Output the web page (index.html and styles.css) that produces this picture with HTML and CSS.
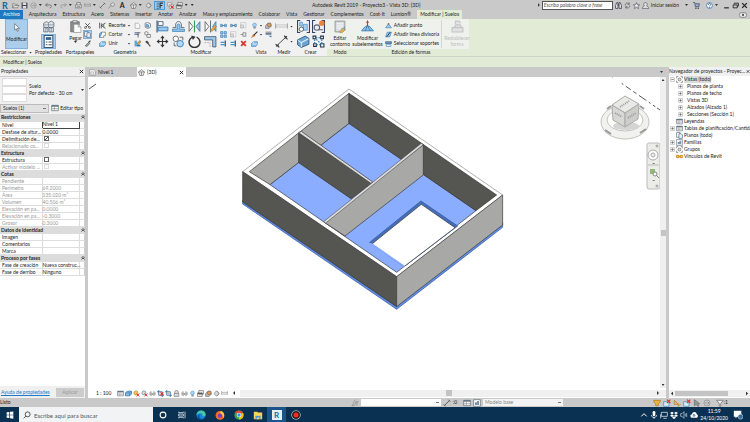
FILE: index.html
```
<!DOCTYPE html>
<html lang="es">
<head>
  <meta charset="UTF-8">
  <meta name="viewport" content="width=device-width, initial-scale=1.0">
  <title>Autodesk Revit 2019 - Proyecto3 - Vista 3D: {3D}</title>
  <link rel="stylesheet" href="styles.css">
</head>
<body>
  <!-- icon sprite -->
  <svg class="sprite" aria-hidden="true">
    <symbol id="open" viewBox="0 0 12 12"><path d="M1 10V3h4l1 1h3v2M1 10l3-4h8l-3 4z" fill="#ddd" stroke="#666"/></symbol>
    <symbol id="save" viewBox="0 0 12 12"><path d="M1 1h9l1 1v9H1z" fill="#445"/><path d="M3 1h6v4H3zM3 7h6v4H3z" fill="#ddd"/></symbol>
    <symbol id="sync" viewBox="0 0 12 12"><circle cx="6" cy="6" r="4.5" fill="#ccc" stroke="#888"/><path d="M3 6h6M7 4l2 2-2 2" fill="none" stroke="#888"/></symbol>
    <symbol id="undo" viewBox="0 0 12 12"><path d="M1 5h7c4 0 4 5 0 5M4 2L1 5l3 3" fill="none" stroke="#555" stroke-width="1.2"/></symbol>
    <symbol id="redo" viewBox="0 0 12 12"><path d="M11 5H4c-4 0-4 5 0 5M8 2l3 3-3 3" fill="none" stroke="#888" stroke-width="1.2"/></symbol>
    <symbol id="print" viewBox="0 0 12 12"><path d="M3 5V1h6v4M1 5h10l1 5H0z" fill="#e4e4e4" stroke="#555"/><path d="M3 8h6" stroke="#555"/></symbol>
    <symbol id="ruler" viewBox="0 0 12 12"><path d="M1 2v6M11 2v6M1 4h10M1 7h10" fill="none" stroke="#888"/></symbol>
    <symbol id="dim" viewBox="0 0 12 12"><path d="M2 10L10 2M1 8l3 3M8 1l3 3" fill="none" stroke="#555" stroke-width="1.3"/></symbol>
    <symbol id="tag" viewBox="0 0 12 12"><path d="M1 11l4-5M5 6c-1-7 8-5 6-1-1 3-4 3-6 1z" fill="#ddd" stroke="#666"/></symbol>
    <symbol id="house" viewBox="0 0 12 12"><path d="M1 5l5-4 5 4-2 6H3z" fill="#eee" stroke="#555"/><path d="M1 5h10M6 5v6" stroke="#555"/></symbol>
    <symbol id="section" viewBox="0 0 12 12"><circle cx="6" cy="6" r="3.5" fill="#ddd" stroke="#777"/><path d="M6 1l5 5-5 5" fill="none" stroke="#777"/></symbol>
    <symbol id="thin" viewBox="0 0 12 12"><path d="M1 2h4M1 5h4M1 8h4M1 11h4" stroke="#234"/><path d="M7 2h5M7 6h4M7 1v10" stroke="#234" stroke-width="2"/></symbol>
    <symbol id="hidden" viewBox="0 0 12 12"><path d="M1 1h7v6H1zM4 4h7v7H4z" fill="#eee" stroke="#888"/><path d="M6 6l5 5M11 6l-5 5" stroke="#d22" stroke-width="1.6"/></symbol>
    <symbol id="windows" viewBox="0 0 12 12"><path d="M3 1h8v6H3zM1 5h8v6H1z" fill="#eee" stroke="#555"/><path d="M1 6h8" stroke="#555" stroke-width="2"/></symbol>
    <symbol id="binoculars" viewBox="0 0 12 12"><path d="M1 11V6l2-5h2v10zM7 11V1h2l2 5v5z" fill="#eee" stroke="#334" stroke-width="1.3"/><path d="M5 5h2" stroke="#334" stroke-width="2"/></symbol>
    <symbol id="key" viewBox="0 0 12 12"><path d="M2 6a4 4 0 017-3M10 6a4 4 0 01-7 3M9 1v3H6M3 11V8h3" fill="none" stroke="#445"/></symbol>
    <symbol id="star" viewBox="0 0 12 12"><path d="M6 1l1.5 3.500 4 .3-3 2.500 1 4L6 9l-3.500 2.300 1-4-3-2.500 4-.3z" fill="#eee" stroke="#445"/></symbol>
    <symbol id="user" viewBox="0 0 12 12"><path d="M0 11c0-3 3-3 4-4-2-3-1-6 2-6s4 3 2 6c1 1 4 1 4 4z" fill="#e4e4e4" stroke="#445"/></symbol>
    <symbol id="cart" viewBox="0 0 12 12"><path d="M0 1h3l1 7h6l1-5H4" fill="#9cb0d0" stroke="#346" stroke-width="1.2"/><circle cx="5" cy="10.500" r="1"/><circle cx="9" cy="10.500" r="1"/></symbol>
    <symbol id="help" viewBox="0 0 12 12"><circle cx="6" cy="6" r="5" fill="#fff" stroke="#357abd" stroke-width="1.5"/><path d="M4 5c0-3 4-3 4-.5C8 6 6 6 6 7.500M6 8.500V10" fill="none" stroke="#235" stroke-width="1.2"/></symbol>
    <symbol id="min" viewBox="0 0 12 12"><path d="M2 10h8" stroke="#222" stroke-width="2"/></symbol>
    <symbol id="restore" viewBox="0 0 12 12"><path d="M4 4V2h7v5H9M2 5h7v5H2z" fill="none" stroke="#222" stroke-width="1.5"/></symbol>
    <symbol id="close" viewBox="0 0 12 12"><path d="M2 2l8 8M10 2l-8 8" stroke="#222" stroke-width="2.2"/></symbol>
    <symbol id="eye" viewBox="0 0 14 12"><rect x="1" y="2" width="12" height="8" rx="3" fill="#eee" stroke="#555"/><circle cx="7" cy="6" r="2" fill="#555"/></symbol>

    <symbol id="cursor" viewBox="0 0 24 24"><path d="M7 2v17l4-4 3 7 3-1-3-7h6z" fill="#fff" stroke="#333" stroke-width="1.3"/></symbol>
    <symbol id="types" viewBox="0 0 24 24"><path d="M3 6l5-3 4 2 5-3 5 3v7l-5 3-5-2-4 2-5-3zM3 14h8v8H3zM13 14h8v8h-8z" fill="#dfe3e6" stroke="#5a6a7a" stroke-width="1.4"/><path d="M12 5v9M3 9h18M7 14v8M17 14v8" stroke="#5a6a7a"/></symbol>
    <symbol id="props" viewBox="0 0 24 24"><path d="M4 1h16v22H4z" fill="#fff" stroke="#3c5876" stroke-width="2"/><path d="M7 4h10v5H7z" fill="#345f8c"/><path d="M7 13h3M12 13h6M7 18h3M12 18h6" stroke="#456" stroke-width="2"/></symbol>
    <symbol id="paste" viewBox="0 0 24 24"><path d="M3 3h16v19H3z" fill="#8b8e91" stroke="#555"/><path d="M7 1h8v4H7z" fill="#ddd" stroke="#555"/><path d="M9 8h8l5 5v10H9z" fill="#fff" stroke="#777"/><path d="M17 8v5h5" fill="#dde" stroke="#777"/></symbol>
    <symbol id="cut" viewBox="0 0 12 12"><path d="M2 2l7 7M10 2L3 9" stroke="#333" stroke-width="1.3"/><circle cx="2.500" cy="9.500" r="1.700" fill="none" stroke="#333"/><circle cx="9.500" cy="9.500" r="1.700" fill="none" stroke="#333"/></symbol>
    <symbol id="copy" viewBox="0 0 12 12"><path d="M1 1h6v8H1z" fill="#fff" stroke="#456"/><path d="M5 3h4l2 2v6H5z" fill="#e8f2fb" stroke="#357"/></symbol>
    <symbol id="match" viewBox="0 0 12 12"><path d="M2 10l6-6 2 2-5 5z" fill="#9ab" stroke="#444"/><path d="M8 4l3-3" stroke="#333" stroke-width="2"/></symbol>
    <symbol id="cope" viewBox="0 0 12 12"><path d="M1 1v10M4 2v9" stroke="#444" stroke-width="1.300"/><path d="M4 6l7-4M4 6l7 5" stroke="#444" stroke-width="1.500"/><path d="M8 5v3" stroke="#2a8bd0" stroke-width="2"/></symbol>
    <symbol id="solid" viewBox="0 0 12 12"><path d="M4 2h7v6H8v3H1V5h3z" fill="#fff" stroke="#555"/><path d="M1 5l3-3v4l-3 5z" fill="#8fc3ea" stroke="#2777b4"/></symbol>
    <symbol id="union" viewBox="0 0 12 12"><path d="M1 6l3-3h7v5l-3 3H1z" fill="#90c2ec" stroke="#2777b4"/><path d="M4 3v4h7" fill="none" stroke="#fff"/></symbol>
    <symbol id="page" viewBox="0 0 12 12"><path d="M2 2h5l3 3v6H2z" fill="#f7f7f7" stroke="#999"/></symbol>
    <symbol id="box" viewBox="0 0 12 12"><path d="M2 2l4-1 5 2v6l-4 2-5-2z" fill="#fff" stroke="#345"/><path d="M4 4l4 1v4L4 8z" fill="#77b3e4" stroke="#2777b4"/></symbol>
    <symbol id="beam" viewBox="0 0 12 12"><path d="M1 3h10M1 6h7M7 3v8" stroke="#556" stroke-width="1.500"/><path d="M1 4h4v2H1z" fill="#6db4ee"/></symbol>
    <symbol id="shapes" viewBox="0 0 12 12"><circle cx="4" cy="4" r="3" fill="#eee" stroke="#555"/><path d="M5 6h6v5H5z" fill="#eee" stroke="#555"/></symbol>
    <symbol id="paint" viewBox="0 0 12 12"><path d="M1 1h4v10H1z" fill="#5aa6dc"/><path d="M5 8h6v3H5z" fill="#2777b4"/><path d="M5 6l5-5 2 2-5 5z" fill="#e9aa3d" stroke="#654"/></symbol>
    <symbol id="hammer" viewBox="0 0 12 12"><path d="M2 3l3-2 4 4-3 2z" fill="#444"/><path d="M6 5l5 6" stroke="#654" stroke-width="2"/></symbol>

    <symbol id="align" viewBox="0 0 24 24"><path d="M2 1v22" stroke="#246" stroke-width="2"/><path d="M4 3h9v7H4z" fill="#fff" stroke="#456" stroke-width="1.500"/><path d="M4 13h18v7H4z" fill="#9bc9ee" stroke="#2777b4" stroke-width="1.500"/></symbol>
    <symbol id="offset" viewBox="0 0 24 24"><path d="M1 14h6c-3-15 13-15 10 0h6" fill="none" stroke="#456" stroke-width="1.500"/><path d="M1 17h9C6 4 18 4 14 17h9v4H1z" fill="#9bc9ee" stroke="#2777b4" stroke-width="1.300"/></symbol>
    <symbol id="mirror" viewBox="0 0 24 24"><path d="M2 3l7 9-7 9z" fill="#fff" stroke="#555" stroke-width="1.500"/><path d="M22 3l-7 9 7 9z" fill="#9bc9ee" stroke="#2777b4" stroke-width="1.500"/><path d="M12 1v22" stroke="#3a9a55" stroke-width="2"/></symbol>
    <symbol id="mirrordraw" viewBox="0 0 24 24"><path d="M2 3l7 9-7 9z" fill="#fff" stroke="#555" stroke-width="1.500"/><path d="M22 3l-6 9 6 9z" fill="#9bc9ee" stroke="#2777b4" stroke-width="1.500"/><path d="M12 1v22" stroke="#456" stroke-width="1.500"/><path d="M12 19l8-9 3 2-8 9z" fill="#efb23f" stroke="#864"/></symbol>
    <symbol id="move" viewBox="0 0 24 24"><path d="M12 1l4 5h-3v5h5V8l5 4-5 4v-3h-5v5h3l-4 5-4-5h3v-5H6v3l-5-4 5-4v3h5V6H8z" fill="#333"/></symbol>
    <symbol id="copies" viewBox="0 0 24 24"><circle cx="7" cy="7" r="5" fill="#fff" stroke="#555" stroke-width="1.500"/><circle cx="15" cy="16" r="6" fill="#b2d7f3" stroke="#2777b4" stroke-width="1.500"/><path d="M14 4h6v6M4 14v6h4" fill="none" stroke="#456" stroke-width="1.500"/></symbol>
    <symbol id="rotate" viewBox="0 0 24 24"><path d="M8 4a10 10 0 108 0" fill="none" stroke="#333" stroke-width="2.600"/><path d="M6 1l8 2-5 6z" fill="#333"/></symbol>
    <symbol id="trim" viewBox="0 0 24 24"><path d="M1 3h21v19h-6V9H1z" fill="#9bc9ee" stroke="#456" stroke-width="1.500"/><path d="M1 14h10v9" fill="none" stroke="#777" stroke-dasharray="3 2"/></symbol>
    <symbol id="split" viewBox="0 0 12 12"><path d="M1 4h3v4H1zM8 4h3v4H8z" fill="#8bc3ec" stroke="#2777b4"/><path d="M4 6h4" stroke="#333"/></symbol>
    <symbol id="array" viewBox="0 0 12 12"><path d="M1 1h4v4H1zM7 1h4v4H7zM1 7h4v4H1zM7 7h4v4H7z" fill="#9bc9ee" stroke="#2777b4"/></symbol>
    <symbol id="scale" viewBox="0 0 12 12"><path d="M1 1h9v9H1z" fill="#f4f4f4" stroke="#bbb"/><path d="M1 5h5v5H1z" fill="#ddd" stroke="#aaa"/></symbol>
    <symbol id="extend" viewBox="0 0 12 12"><path d="M9 1v10" stroke="#345" stroke-width="2"/><path d="M1 4h7M1 8h7" stroke="#4393cc" stroke-width="2"/></symbol>
    <symbol id="pin" viewBox="0 0 12 12"><path d="M1 6h4M5 3h5v6H5z" fill="#eee" stroke="#777" stroke-width="1.300"/></symbol>
    <symbol id="delete" viewBox="0 0 12 12"><path d="M2 2l8 8M10 2l-8 8" stroke="#dc3428" stroke-width="3"/></symbol>
    <symbol id="bulb" viewBox="0 0 12 12"><path d="M4 8C-1 1 13-1 8 8z" fill="#a7d4f8" stroke="#4590cb"/><path d="M4 9h4v2H4z" fill="#777"/></symbol>
    <symbol id="override" viewBox="0 0 12 12"><path d="M1 6l4-4h5l1 5-4 4H1z" fill="#bbb" stroke="#666"/><circle cx="7" cy="5" r="3" fill="#e79b52" stroke="#765"/></symbol>
    <symbol id="brush" viewBox="0 0 12 12"><path d="M1 11l3-5 3 2z" fill="#c8782c" stroke="#c8782c"/><path d="M5 7l6-6" stroke="#333" stroke-width="2"/></symbol>
    <symbol id="lines" viewBox="0 0 12 12"><path d="M1 2h10" stroke="#333"/><path d="M1 5h10" stroke="#246" stroke-width="2"/><path d="M6 8h5v3z" fill="#2777b4"/></symbol>
    <symbol id="measure" viewBox="0 0 24 24"><path d="M1 6v10M23 6v10" stroke="#999" stroke-width="1.500"/><path d="M2 9h20v4H2z" fill="#eee" stroke="#aaa"/></symbol>
    <symbol id="bigdim" viewBox="0 0 24 24"><path d="M4 19L20 4" stroke="#333" stroke-width="1.600"/><path d="M1 17l7 6M17 1l6 7M2 21l5-3M18 6l4-4" stroke="#333" stroke-width="2"/></symbol>
    <symbol id="group" viewBox="0 0 24 24"><path d="M6 1H1v22h5M18 1h5v22h-5" fill="none" stroke="#346" stroke-width="2"/><path d="M5 4h5v7H5zM12 8h7v11h-7z" fill="#a7d0f0" stroke="#2777b4"/><circle cx="8" cy="17" r="4" fill="#fff" stroke="#345" stroke-width="1.500"/></symbol>
    <symbol id="similar" viewBox="0 0 24 24"><path d="M6 1H1v22h5M18 1h5v22h-5" fill="none" stroke="#346" stroke-width="2"/><circle cx="9" cy="14" r="5" fill="#eee" stroke="#567" stroke-width="2"/><circle cx="18" cy="6" r="5" fill="#e8853d"/><path d="M12 18h8" stroke="#567" stroke-width="2"/></symbol>
    <symbol id="assembly" viewBox="0 0 24 24"><path d="M1 9l14-7 7 4v11L8 23l-7-5z" fill="#6da5d2" stroke="#275478" stroke-width="1.500"/><path d="M2 10l6 4 13-7M8 14v8" fill="none" stroke="#d8edff" stroke-width="2"/></symbol>
    <symbol id="parts" viewBox="0 0 24 24"><path d="M2 2h5v5H2zM16 2h5v5h-5zM3 16h5v5H3zM16 16h6v6h-6z" fill="#fff" stroke="#234" stroke-width="2"/><path d="M7 5h9M5 8v8M18 8v8M8 18h8M8 8l8 8" stroke="#2777b4" stroke-width="2" stroke-dasharray="3 2"/></symbol>
    <symbol id="sketch" viewBox="0 0 24 24"><path d="M2 2h18v16l-5 4H2z" fill="#d9dcde" stroke="#888" stroke-width="1.500"/><path d="M5 7h12M5 11h12M5 15h8" stroke="#fff" stroke-width="1.500"/><path d="M13 17h6v-5" fill="none" stroke="#2777b4"/><path d="M10 22l7-7 4 3-7 6z" fill="#efb23f" stroke="#875"/></symbol>
    <symbol id="subelem" viewBox="0 0 24 24"><path d="M1 20l6-7 5-3 5 3 6 7z" fill="#91c5ed" stroke="#2777b4" stroke-width="1.500"/><path d="M12 1v9" stroke="#c33" stroke-width="2"/><path d="M9 5l3-4 3 4z" fill="#c33"/><path d="M12 10l-4 10M12 10l5 10" stroke="#246"/></symbol>
    <symbol id="point" viewBox="0 0 12 12"><path d="M1 10l5-7 5 7z" fill="#9bc9ee" stroke="#2777b4"/><circle cx="6" cy="3" r="1.500" fill="#a55"/></symbol>
    <symbol id="splitline" viewBox="0 0 12 12"><path d="M1 10l3-8h7l-3 8z" fill="#9bc9ee" stroke="#2777b4"/><path d="M3 10l6-8" stroke="#135" stroke-width="1.500"/></symbol>
    <symbol id="support" viewBox="0 0 12 12"><path d="M1 3h10v3H1z" fill="#5ca4da" stroke="#246"/><path d="M2 8h8v3H2z" fill="#fff" stroke="#2777b4"/></symbol>
    <symbol id="reset" viewBox="0 0 24 24"><path d="M2 22V14h20v8zM6 14l3-5h8l3 5M8 8V2h7l3 4" fill="#e2e2e2" stroke="#c4c4c4" stroke-width="2"/></symbol>

    <symbol id="sheet" viewBox="0 0 12 12"><path d="M1 2h10v8H1z" fill="#fff" stroke="#567"/><path d="M1 3h10" stroke="#567" stroke-width="2"/><path d="M1 7h10M5 4v6" stroke="#888"/></symbol>
    <symbol id="plan" viewBox="0 0 12 12"><path d="M1 1h7l3 3v7H1z" fill="#f4f4f4" stroke="#888"/><path d="M3 5h5v4H3z" fill="none" stroke="#999"/></symbol>
    <symbol id="views" viewBox="0 0 12 12"><path d="M1 4V1h3M8 1h3v3M11 8v3H8M4 11H1V8" fill="none" stroke="#555"/><circle cx="6" cy="6" r="2.500" fill="#ddd" stroke="#555"/></symbol>
    <symbol id="family" viewBox="0 0 12 12"><path d="M1 1h10v10H1z" fill="#fff" stroke="#567"/><path d="M3 9V5h3V3h3v6z" fill="#7d93aa"/></symbol>
    <symbol id="link" viewBox="0 0 12 12"><path d="M1 4h4v4H1zM7 4h4v4H7zM4 6h4" fill="#f6cf62" stroke="#c98a17" stroke-width="1.500"/></symbol>
    <symbol id="expand" viewBox="0 0 8 8"><path d="M1 1h6v6H1z" fill="#fff" stroke="#aaa"/><path d="M2 4h4M4 2v4" stroke="#555"/></symbol>
    <symbol id="collapse" viewBox="0 0 8 8"><path d="M1 1h6v6H1z" fill="#fff" stroke="#aaa"/><path d="M2 4h4" stroke="#555"/></symbol>
    <symbol id="fold" viewBox="0 0 8 8"><path d="M1 4l3-3 3 3M1 7l3-3 3 3" fill="none" stroke="#222" stroke-width="1.500"/></symbol>
    <symbol id="cubeblue" viewBox="0 0 12 12"><path d="M1 5l3-3h7v5l-3 3H1z" fill="#8cc1ec" stroke="#276aa2" stroke-width="1.300"/><path d="M1 5h7v5M8 5l3-3" fill="none" stroke="#276aa2"/></symbol>
    <symbol id="sunoff" viewBox="0 0 12 12"><circle cx="5" cy="5" r="3.500" fill="#f7c857" stroke="#a87a20"/><path d="M6 6l5 5M11 6l-5 5" stroke="#d33" stroke-width="1.600"/></symbol>
    <symbol id="ringoff" viewBox="0 0 12 12"><circle cx="5" cy="5" r="3.500" fill="#ddd" stroke="#4b6e8e"/><path d="M6 6l5 5M11 6l-5 5" stroke="#d33" stroke-width="1.600"/></symbol>
    <symbol id="crop" viewBox="0 0 12 12"><path d="M3 0v9h9M0 3h9v9" fill="none" stroke="#337ab7" stroke-width="1.600"/><path d="M4 4h4v4H4z" fill="#bbb"/></symbol>
    <symbol id="cropoff" viewBox="0 0 12 12"><path d="M3 0v9h9M0 3h9v9" fill="none" stroke="#337ab7" stroke-width="1.600"/><path d="M6 4l5 5M11 4L6 9" stroke="#d33" stroke-width="2"/></symbol>
    <symbol id="lock" viewBox="0 0 12 12"><path d="M3 6V3c0-3 6-3 6 0v3M2 6h8v5H2z" fill="#ddd" stroke="#666"/></symbol>
    <symbol id="glasses" viewBox="0 0 12 12"><path d="M1 5l3-3M11 5L8 2" stroke="#666"/><circle cx="3.500" cy="7" r="2.200" fill="#ddd" stroke="#666"/><circle cx="8.500" cy="7" r="2.200" fill="#ddd" stroke="#666"/></symbol>
    <symbol id="worksets" viewBox="0 0 12 12"><path d="M2 10L6 1M5 10L8 4M9 10V4M1 10h4M7 4h4" fill="none" stroke="#888"/></symbol>
    <symbol id="filter" viewBox="0 0 12 12"><path d="M1 2h10L7 7v4H5V7z" fill="#eee" stroke="#666"/></symbol>
    <symbol id="filterorange" viewBox="0 0 12 12"><path d="M1 2h10v2L8 7v3H4V7L1 4z" fill="#eeb23c" stroke="#a4731c"/></symbol>
    <symbol id="select" viewBox="0 0 12 12"><path d="M2 1v9l3-2 2 3 2-1-2-3h3z" fill="#999" stroke="#666"/></symbol>
    <symbol id="selectoff" viewBox="0 0 12 12"><path d="M1 4h8v7H1z" fill="#d7ebfa" stroke="#3d83b8"/><path d="M6 1l5 5M11 1L6 6" stroke="#d33" stroke-width="1.800"/></symbol>
    <symbol id="pinoff" viewBox="0 0 12 12"><path d="M2 2l6 6v3l3-3M2 2v6h6" fill="#f2bb68" stroke="#b4722b"/></symbol>

    <symbol id="win" viewBox="0 0 12 12"><path d="M1 2l4-.6v4.200H1zM6 1.300L11 .6v5H6zM1 6.500h4v4L1 10zM6 6.500h5v5l-5-.8z" fill="#fff"/></symbol>
    <symbol id="search" viewBox="0 0 12 12"><circle cx="7" cy="5" r="3.700" fill="none" stroke="#333" stroke-width="1.200"/><path d="M4.500 7.500L1 11" stroke="#333" stroke-width="1.200"/></symbol>
    <symbol id="cortana" viewBox="0 0 12 12"><circle cx="6" cy="6" r="4.300" fill="none" stroke="#fff" stroke-width="1.600"/></symbol>
    <symbol id="taskview" viewBox="0 0 12 12"><path d="M1 1v1.500h7V1M1 11V9.500h7V11M1 4.500h7v3H1zM10.500 1v10" fill="none" stroke="#dde6ee" stroke-width="1.200"/></symbol>
    <symbol id="edge" viewBox="0 0 12 12"><circle cx="6" cy="6" r="5.500" fill="#1683d8"/><path d="M.6 6C1 2 4 .4 6.500.5 10 .7 12 3.500 11.500 6c-.5 2-4 2-4 1C9 4 4 2 .6 6z" fill="#46c9a3"/><path d="M4.500 5c-2 4 1 7 5.500 5-2 2-8 2-8-2 0-1 1-2.500 2.500-3z" fill="#0c4c9b"/></symbol>
    <symbol id="firefox" viewBox="0 0 12 12"><circle cx="6" cy="6.500" r="5.300" fill="#fb6a25"/><path d="M7 1c4 2 5 6 3 9 0-4-2-5-5-6 1 0 2-1 2-3z" fill="#ffcf3d"/><circle cx="6" cy="6.800" r="2.600" fill="#7b3fc4"/></symbol>
    <symbol id="chrome" viewBox="0 0 12 12"><circle cx="6" cy="6" r="5.500" fill="#33a852"/><path d="M6 6L1.200 3.300A5.500 5.500 0 0110.800 3.300z" fill="#ea4335"/><path d="M6 6l4.800-2.700A5.500 5.500 0 016 11.500z" fill="#fbbc05"/><circle cx="6" cy="6" r="2.700" fill="#fff"/><circle cx="6" cy="6" r="2" fill="#4285f4"/></symbol>
    <symbol id="folder" viewBox="0 0 12 12"><path d="M1 2h4l1 1h5v8H1z" fill="#f8d265"/><path d="M3 7h6v4H3z" fill="#3c9be0"/><path d="M4.500 9h3v2h-3z" fill="#f8d265"/></symbol>
    <symbol id="record" viewBox="0 0 12 12"><circle cx="6" cy="6" r="5.500" fill="#eee"/><circle cx="6" cy="6" r="4.800" fill="#222"/><circle cx="6" cy="6" r="3" fill="#f52a1e"/></symbol>
    <symbol id="up" viewBox="0 0 12 12"><path d="M2 8l4-4 4 4" fill="none" stroke="#fff" stroke-width="1.500"/></symbol>
    <symbol id="mic" viewBox="0 0 12 12"><rect x="4" width="4" height="8" rx="2" fill="#fff"/><path d="M2 6c0 5 8 5 8 0M6 9v3" fill="none" stroke="#fff"/></symbol>
    <symbol id="monitor" viewBox="0 0 12 12"><path d="M2 2h9v6H2zM5 11h5M1 5v6" fill="none" stroke="#fff"/></symbol>
    <symbol id="dropbox" viewBox="0 0 12 12"><path d="M3 1l3 2-3 2-3-2zM9 1l3 2-3 2-3-2zM3 5l3 2-3 2-3-2zM9 5l3 2-3 2-3-2zM6 8l3 2-3 2-3-2z" fill="#fff"/></symbol>
    <symbol id="volume" viewBox="0 0 12 12"><path d="M1 4h2l3-3v10L3 8H1zM8 4v4M10 3v6" fill="none" stroke="#ccd6df"/></symbol>
    <symbol id="cloud" viewBox="0 0 12 12"><path d="M2 10c-3-2-1-5 1-5 1-5 7-4 7 0 3 1 2 5 0 5z" fill="#fff"/><path d="M6 9V5M4 7l2-2 2 2" fill="none" stroke="#0b3152"/></symbol>
    <symbol id="notice" viewBox="0 0 12 12"><path d="M1 1h9v7H5l-2 2V8H1z" fill="#fff"/><circle cx="9" cy="8" r="3" fill="#3a6f9c" stroke="#dbe8f2" stroke-width=".6"/></symbol>
  </svg>

  <header class="titlebar">
    <div class="quick">
      <b class="logo">R</b>
      <svg><use href="#open"/></svg>
      <svg><use href="#save"/></svg>
      <svg><use href="#sync"/></svg><i class="arrow"></i>
      <svg><use href="#undo"/></svg><i class="arrow"></i>
      <svg><use href="#redo"/></svg><i class="arrow"></i>
      <svg><use href="#print"/></svg>
      <svg><use href="#ruler"/></svg><i class="arrow"></i>
      <svg><use href="#dim"/></svg>
      <svg><use href="#tag"/></svg>
      <b class="letter">A</b>
      <svg><use href="#house"/></svg><i class="arrow"></i>
      <svg><use href="#section"/></svg>
      <span class="pressed"><svg><use href="#thin"/></svg></span>
      <svg><use href="#hidden"/></svg>
      <svg><use href="#windows"/></svg><i class="arrow"></i><i class="arrow"></i>
    </div>
    <h1>Autodesk Revit 2019 - Proyecto3 - Vista 3D: {3D}</h1>
    <div class="infocenter">
      <i class="arrow right"></i>
      <input type="text" placeholder="Escriba palabra clave o frase" aria-label="Buscar ayuda">
      <svg><use href="#binoculars"/></svg>
      <svg><use href="#key"/></svg>
      <svg><use href="#star"/></svg>
      <svg><use href="#user"/></svg>
      <a href="#" class="login">Iniciar sesión</a><i class="arrow"></i>
      <svg><use href="#cart"/></svg>
      <svg class="help"><use href="#help"/></svg><i class="arrow"></i>
      <svg class="first"><use href="#min"/></svg>
      <svg><use href="#restore"/></svg>
      <svg><use href="#close"/></svg>
    </div>
  </header>

  <nav class="tabs">
    <a href="#" class="file">Archivo</a>
    <a href="#">Arquitectura</a>
    <a href="#">Estructura</a>
    <a href="#">Acero</a>
    <a href="#">Sistemas</a>
    <a href="#">Insertar</a>
    <a href="#">Anotar</a>
    <a href="#">Analizar</a>
    <a href="#">Masa y emplazamiento</a>
    <a href="#">Colaborar</a>
    <a href="#">Vista</a>
    <a href="#">Gestionar</a>
    <a href="#">Complementos</a>
    <a href="#">Cost-It</a>
    <a href="#">Lumion®</a>
    <a href="#" class="active">Modificar | Suelos</a>
    <svg><use href="#eye"/></svg>
  </nav>

  <section class="ribbon">
    <div class="panel w-select">
      <div class="tools"><button class="big on"><svg><use href="#cursor"/></svg>Modificar</button></div>
      <h2>Seleccionar <i class="arrow"></i></h2>
    </div>
    <div class="panel w-props">
      <div class="tools stack">
        <button><svg class="lg"><use href="#types"/></svg></button>
        <button class="on"><svg class="lg"><use href="#props"/></svg></button>
      </div>
      <h2>Propiedades</h2>
    </div>
    <div class="panel w-clip">
      <div class="tools">
        <button class="big"><svg><use href="#paste"/></svg>Pegar<i class="arrow"></i></button>
        <div class="rows">
          <button><svg><use href="#cut"/></svg></button>
          <button class="on"><svg><use href="#copy"/></svg></button>
          <button><svg><use href="#match"/></svg></button>
        </div>
      </div>
      <h2>Portapapeles</h2>
    </div>
    <div class="panel w-geo">
      <div class="tools">
        <div class="rows text">
          <button><svg><use href="#cope"/></svg>Recorte<i class="arrow"></i></button>
          <button><svg><use href="#solid"/></svg>Cortar<i class="arrow"></i></button>
          <button><svg><use href="#union"/></svg>Unir<i class="arrow"></i></button>
        </div>
        <div class="rows">
          <button><svg><use href="#page"/></svg></button>
          <button><svg><use href="#beam"/></svg></button>
          <button><svg><use href="#paint"/></svg></button>
        </div>
        <div class="rows">
          <button><svg><use href="#box"/></svg></button>
          <button><svg><use href="#shapes"/></svg></button>
          <button><svg><use href="#hammer"/></svg></button>
        </div>
      </div>
      <h2>Geometría</h2>
    </div>
    <div class="panel w-modify">
      <div class="tools">
        <div class="grid4">
          <button><svg class="lg"><use href="#align"/></svg></button>
          <button><svg class="lg"><use href="#offset"/></svg></button>
          <button><svg class="lg"><use href="#mirror"/></svg></button>
          <button><svg class="lg"><use href="#mirrordraw"/></svg></button>
          <button><svg class="lg"><use href="#move"/></svg></button>
          <button><svg class="lg"><use href="#copies"/></svg></button>
          <button><svg class="lg"><use href="#rotate"/></svg></button>
          <button><svg class="lg"><use href="#trim"/></svg></button>
        </div>
        <div class="rows">
          <button><svg><use href="#split"/></svg></button>
          <button><svg><use href="#array"/></svg></button>
          <button><svg><use href="#extend"/></svg></button>
        </div>
        <div class="rows">
          <button><svg><use href="#split"/></svg></button>
          <button><svg><use href="#scale"/></svg></button>
          <button><svg><use href="#extend"/></svg></button>
        </div>
        <div class="rows">
          <button><svg><use href="#scale"/></svg></button>
          <button><svg><use href="#pin"/></svg></button>
          <button><svg><use href="#delete"/></svg></button>
        </div>
      </div>
      <h2>Modificar</h2>
    </div>
    <div class="panel w-view">
      <div class="tools">
        <div class="rows">
          <button><svg><use href="#bulb"/></svg><i class="arrow"></i></button>
          <button><svg><use href="#brush"/></svg><i class="arrow"></i></button>
          <button><svg><use href="#union"/></svg></button>
        </div>
        <div class="rows">
          <button><svg><use href="#override"/></svg></button>
          <button><svg><use href="#lines"/></svg></button>
        </div>
      </div>
      <h2>Vista</h2>
    </div>
    <div class="panel w-measure">
      <div class="tools stack">
        <button><svg class="lg"><use href="#measure"/></svg><i class="arrow"></i></button>
        <button><svg class="lg"><use href="#bigdim"/></svg><i class="arrow"></i></button>
      </div>
      <h2>Medir</h2>
    </div>
    <div class="panel w-create">
      <div class="tools">
        <div class="grid2">
          <button><svg class="lg"><use href="#group"/></svg></button>
          <button><svg class="lg"><use href="#similar"/></svg></button>
          <button><svg class="lg"><use href="#assembly"/></svg></button>
          <button><svg class="lg"><use href="#parts"/></svg></button>
        </div>
      </div>
      <h2>Crear</h2>
    </div>
    <div class="panel w-mode green">
      <div class="tools"><button class="big"><svg><use href="#sketch"/></svg>Editar<br>contorno</button></div>
      <h2>Modo</h2>
    </div>
    <div class="panel w-shape green">
      <div class="tools">
        <button class="big"><svg><use href="#subelem"/></svg>Modificar<br>subelementos</button>
        <div class="rows text">
          <button><svg><use href="#point"/></svg>Añadir punto</button>
          <button><svg><use href="#splitline"/></svg>Añadir línea divisoria</button>
          <button><svg><use href="#support"/></svg>Seleccionar soportes</button>
        </div>
        <button class="big last" disabled><svg><use href="#reset"/></svg>Restablecer<br>forma</button>
      </div>
      <h2>Edición de formas</h2>
    </div>
  </section>

  <div class="options">Modificar | Suelos</div>

  <main>
    <aside class="properties">
      <div class="caption">Propiedades <svg><use href="#close"/></svg></div>
      <div class="type">
        <div class="swatch"><i></i><i></i><i></i></div>
        <p>Suelo<br>Por defecto - 30 cm</p>
        <i class="arrow"></i>
      </div>
      <div class="filter">
        <select aria-label="Filtro de propiedades"><option>Suelos (1)</option></select>
        <button><svg><use href="#sheet"/></svg>Editar tipo</button>
      </div>
      <div class="sheet">
        <table>
          <colgroup><col class="name"><col><col class="bar"></colgroup>
          <tr class="head"><th colspan="2">Restricciones</th><td><svg><use href="#fold"/></svg></td></tr>
          <tr><th>Nivel</th><td class="boxed">Nivel 1</td><td></td></tr>
          <tr><th>Desfase de altur...</th><td>0.0000</td><td></td></tr>
          <tr><th><label for="delim">Delimitación de...</label></th><td><input type="checkbox" id="delim" checked></td><td></td></tr>
          <tr class="off"><th><label for="rel">Relacionado co...</label></th><td><input type="checkbox" id="rel" disabled></td><td></td></tr>
          <tr class="head"><th colspan="2">Estructura</th><td><svg><use href="#fold"/></svg></td></tr>
          <tr><th><label for="estr">Estructura</label></th><td><input type="checkbox" id="estr"></td><td></td></tr>
          <tr class="off"><th><label for="act">Activar modelo ...</label></th><td><input type="checkbox" id="act" disabled></td><td></td></tr>
          <tr class="head"><th colspan="2">Cotas</th><td><svg><use href="#fold"/></svg></td></tr>
          <tr class="off"><th>Pendiente</th><td></td><td></td></tr>
          <tr class="off"><th>Perímetro</th><td>69.2000</td><td></td></tr>
          <tr class="off"><th>Área</th><td>135.020 m²</td><td></td></tr>
          <tr class="off"><th>Volumen</th><td>40.506 m³</td><td></td></tr>
          <tr class="off"><th>Elevación en pa...</th><td>0.0000</td><td></td></tr>
          <tr class="off"><th>Elevación en pa...</th><td>-0.3000</td><td></td></tr>
          <tr class="off"><th>Grosor</th><td>0.3000</td><td></td></tr>
          <tr class="head"><th colspan="2">Datos de identidad</th><td><svg><use href="#fold"/></svg></td></tr>
          <tr><th>Imagen</th><td></td><td></td></tr>
          <tr><th>Comentarios</th><td></td><td></td></tr>
          <tr><th>Marca</th><td></td><td></td></tr>
          <tr class="head"><th colspan="2">Proceso por fases</th><td><svg><use href="#fold"/></svg></td></tr>
          <tr><th>Fase de creación</th><td>Nueva construc...</td><td></td></tr>
          <tr><th>Fase de derribo</th><td>Ninguno</td><td></td></tr>
        </table>
      </div>
      <div class="apply">
        <a href="#">Ayuda de propiedades</a>
        <button disabled>Aplicar</button>
      </div>
    </aside>

    <section class="workspace">
      <div class="viewtabs">
        <a href="#"><svg><use href="#plan"/></svg>Nivel 1</a>
        <a href="#" class="current"><svg><use href="#house"/></svg>{3D}<svg class="x"><use href="#close"/></svg></a>
        <i class="arrow"></i>
      </div>
      <div class="viewport">
        <svg class="model" viewBox="88 77 572 311">
          <g transform="translate(230 80) scale(.3333)" stroke="#333" stroke-width="2">
            <!-- slab edge below the walls -->
            <path d="M38 362v10l462 316 318-246v-14L500 676z" fill="#5f8fe8" stroke="#2f4f96"/>
            <!-- wall tops -->
            <path d="M38 275L357 27l461 318-318 245z" fill="#fff" stroke="#888"/>
            <!-- floor -->
            <path d="M357 130l381 262-238 185L120 314z" fill="#8aadff"/>
            <!-- inner faces of outer walls -->
            <path d="M58 275L357 40v90L120 314z" fill="#a8a8a6"/>
            <path d="M357 40l443 305-62 47-381-262z" fill="#555552"/>
            <!-- partitions -->
            <path d="M206 160v88l157 108 64-47z" fill="#555552"/>
            <path d="M206 158l8-4 213 151-3 6z" fill="#ddd"/>
            <path d="M580 194v91L345 468l-62-41z" fill="#a8a8a6"/>
            <path d="M574 190l6 4-293 235-6-4z" fill="#ddd" stroke-width="1.500"/>
            <!-- floor opening -->
            <path d="M573 363l110 75-161 122-104-72z" fill="#456eb8" stroke="#2f4f96"/>
            <path d="M574 373l101 70-153 117-96-68z" fill="#fff"/>
            <path d="M418 490l8 3 98 67" fill="none" stroke="#8aadff" stroke-width="5"/>
            <!-- outer faces -->
            <path d="M38 275l462 315v90L38 366z" fill="#555552"/>
            <path d="M500 590l318-245v90L500 680z" fill="#a8a8a6"/>
          </g>
          <path d="M89 89l7-5" stroke="#555" fill="none"/>
          <path d="M611 76l49 34" stroke="#555" stroke-dasharray="2 11 2 3 6 3 4 3 9 3 2 3 3" fill="none"/>
          <!-- view cube -->
          <g fill="none" stroke="#c2c2c0">
            <ellipse cx="625" cy="122" rx="24" ry="17" fill="#f1f1ef"/>
            <ellipse cx="625" cy="120" rx="18" ry="11" fill="#fff"/>
          </g>
          <ellipse cx="626" cy="126" rx="13" ry="4" fill="#d4d4d2"/>
          <g fill="#d7d7d4" stroke="#aaa">
            <path d="M612 105l13-9 14 8-14 9z" fill="#e9e9e7"/>
            <path d="M612 105l13 8v14l-12-7z"/>
            <path d="M639 104l-14 9v14l13-8z" fill="#cdcdca"/>
            <path d="M605 130l6 4M640 133l6-4M607 109l4-3M640 106l4 3" fill="none" stroke="#999" stroke-width="2"/>
          </g>
          <path d="M620 107l9-6M615 113l7 4M628 118l8-5" stroke="#999" stroke-width="2" stroke-dasharray="1 1"/>
          <!-- navigation bar -->
          <rect x="647" y="143" width="13" height="46" rx="2" fill="#ececea" stroke="#bbb"/>
          <path d="M648 165h11" stroke="#bbb"/>
          <circle cx="653" cy="155" r="5" fill="#fff" stroke="#aaa"/>
          <circle cx="653" cy="155" r="2" fill="#eee" stroke="#aaa"/>
          <path d="M650 169h5v5h-5z" fill="#8fbc72"/>
          <circle cx="655" cy="174" r="2" fill="#fff" stroke="#888"/><path d="M656 175l3 3" stroke="#888"/>
          <path d="M652 163h3l-1 1zM652 180h3l-1 1z" fill="#555"/>
          <circle cx="657" cy="146" r="1" fill="#fff" stroke="#999"/><circle cx="657" cy="186" r="1" fill="#fff" stroke="#999"/>
        </svg>
        <div class="vscroll"><i class="arrow up"></i><b></b><i class="arrow"></i></div>
      </div>
      <div class="viewbar">
        <span>1 : 100</span>
        <svg><use href="#sheet"/></svg>
        <svg><use href="#cubeblue"/></svg>
        <svg><use href="#sunoff"/></svg>
        <svg><use href="#ringoff"/></svg>
        <svg><use href="#glasses"/></svg>
        <svg><use href="#cropoff"/></svg>
        <svg><use href="#crop"/></svg>
        <svg><use href="#lock"/></svg>
        <svg><use href="#glasses"/></svg>
        <svg><use href="#bulb"/></svg>
        <svg><use href="#windows"/></svg>
        <svg><use href="#override"/></svg>
        <svg><use href="#section"/></svg>
        <svg><use href="#ruler"/></svg>
        <i class="arrow left"></i>
        <div class="hscroll"><b></b><i class="arrow right"></i></div>
      </div>
    </section>

    <aside class="browser">
      <div class="caption">Navegador de proyectos - Proyec... <svg><use href="#close"/></svg></div>
      <ul class="tree">
        <li><svg class="pm"><use href="#collapse"/></svg><svg><use href="#views"/></svg><span class="sel">Vistas (todo)</span></li>
        <li class="sub"><svg class="pm"><use href="#expand"/></svg>Planos de planta</li>
        <li class="sub"><svg class="pm"><use href="#expand"/></svg>Planos de techo</li>
        <li class="sub"><svg class="pm"><use href="#expand"/></svg>Vistas 3D</li>
        <li class="sub"><svg class="pm"><use href="#expand"/></svg>Alzados (Alzado 1)</li>
        <li class="sub"><svg class="pm"><use href="#expand"/></svg>Secciones (Sección 1)</li>
        <li><i class="pm"></i><svg><use href="#sheet"/></svg>Leyendas</li>
        <li><svg class="pm"><use href="#expand"/></svg><svg><use href="#sheet"/></svg>Tablas de planificación/Cantida</li>
        <li><i class="pm"></i><svg><use href="#copy"/></svg>Planos (todo)</li>
        <li><svg class="pm"><use href="#expand"/></svg><svg><use href="#family"/></svg>Familias</li>
        <li><svg class="pm"><use href="#expand"/></svg><svg><use href="#views"/></svg>Grupos</li>
        <li><i class="pm"></i><svg><use href="#link"/></svg>Vínculos de Revit</li>
      </ul>
      <div class="bscroll"><i class="arrow left"></i><b></b><i class="arrow right"></i></div>
    </aside>
  </main>

  <footer class="status">
    <span class="msg">Listo</span>
    <svg><use href="#worksets"/></svg>
    <select aria-label="Subproyecto activo"><option></option></select>
    <svg><use href="#dim"/></svg><span class="count">:0</span>
    <svg><use href="#sheet"/></svg>
    <svg><use href="#family"/></svg>
    <select aria-label="Opción de diseño" disabled><option>Modelo base</option></select>
    <div class="picks">
      <svg><use href="#filterorange"/></svg>
      <svg><use href="#selectoff"/></svg>
      <svg><use href="#pinoff"/></svg>
      <svg><use href="#selectoff"/></svg>
      <svg><use href="#select"/></svg>
      <svg><use href="#sync"/></svg>
      <span><svg><use href="#filter"/></svg>:1</span>
    </div>
  </footer>

  <div class="taskbar">
    <button class="start" aria-label="Inicio"><svg><use href="#win"/></svg></button>
    <label class="find"><svg><use href="#search"/></svg><input type="text" placeholder="Escribe aquí para buscar"></label>
    <button><svg><use href="#cortana"/></svg></button>
    <button><svg><use href="#taskview"/></svg></button>
    <button><svg class="app"><use href="#edge"/></svg></button>
    <button><svg class="app"><use href="#firefox"/></svg></button>
    <button class="run"><svg class="app"><use href="#chrome"/></svg></button>
    <button class="run"><svg class="app"><use href="#folder"/></svg></button>
    <button class="run front"><b>R</b></button>
    <button class="run"><svg class="app"><use href="#record"/></svg></button>
    <div class="tray">
      <svg><use href="#up"/></svg>
      <svg><use href="#mic"/></svg>
      <svg><use href="#monitor"/></svg>
      <svg><use href="#dropbox"/></svg>
      <svg><use href="#volume"/></svg>
      <svg><use href="#cloud"/></svg>
      <time>11:59<br>24/10/2020</time>
      <svg class="app"><use href="#notice"/></svg>
    </div>
  </div>
</body>
</html>
```
FILE: styles.css
```
* {
  box-sizing: border-box;
}
body {
  margin: 0;
  min-height: 100vh;
  display: flex;
  flex-direction: column;
  font-family: Lato, "Open Sans", sans-serif;
  font-size: 5px;
  line-height: 7px;
  color: #222;
  background: #c9c9c9;
  overflow: hidden;
}
h1, h2, p, ul {
  margin: 0;
  padding: 0;
  font-size: 5px;
  font-weight: normal;
}
a {
  color: inherit;
  text-decoration: none;
}
button, input, select {
  margin: 0;
  padding: 0;
  border: 0;
  background: none;
  font: inherit;
  color: inherit;
}
svg {
  width: 8px;
  height: 8px;
  flex: none;
}
.sprite {
  display: none;
}

/* small triangles */
.arrow {
  flex: none;
  width: 3px;
  height: 2px;
  background: #333;
  clip-path: polygon(0 0, 100% 0, 50% 100%);
}
.arrow.up {
  clip-path: polygon(50% 0, 100% 100%, 0 100%);
}
.arrow.right {
  width: 2px;
  height: 4px;
  clip-path: polygon(0 0, 100% 50%, 0 100%);
}
.arrow.left {
  width: 2px;
  height: 4px;
  clip-path: polygon(100% 0, 100% 100%, 0 50%);
}

/* title bar */
.titlebar {
  display: flex;
  justify-content: space-between;
  align-items: center;
  height: 10px;
}
.titlebar svg {
  width: 7px;
  height: 7px;
}
.quick {
  display: flex;
  align-items: center;
  gap: 2px;
  padding-left: 2px;
}
.quick .arrow {
  margin-right: 1px;
}
.logo {
  color: #1763a6;
  font-size: 9px;
  margin-right: 2px;
}
.letter {
  font-size: 7px;
  margin: 0 3px;
}
.pressed {
  display: flex;
  padding: 0 1px;
  background: #9cc9ee;
  border: 1px solid #4e98d3;
}
.infocenter {
  display: flex;
  align-items: center;
  gap: 1px;
  padding-right: 1px;
}
.infocenter svg {
  margin-right: 1px;
}
.infocenter input {
  width: 71px;
  height: 9px;
  margin-right: 1px;
  padding: 0 1px;
  border: 1px solid #555;
  background: #fff;
  font-style: italic;
}
.infocenter .login {
  margin-right: 5px;
}
.infocenter .arrow {
  margin-right: 4px;
}
.infocenter .arrow.right {
  margin-right: 1px;
}
.infocenter .help {
  margin-left: 4px;
}

/* ribbon tabs */
.tabs {
  display: flex;
  align-items: center;
  height: 9px;
  line-height: 9px;
  gap: 6px;
}
.tabs .file {
  padding: 0 3px;
  background: #1d7ac0;
  color: #fff;
}
.tabs .active {
  padding: 0 3px;
  background: #e2ebd5;
}
.tabs svg {
  margin-left: auto;
  margin-right: 3px;
}

/* ribbon */
.ribbon {
  display: flex;
  height: 38px;
  background: #e2ebd5;
  border-bottom: 1px solid #cfd3cb;
}
.panel {
  display: flex;
  flex-direction: column;
  align-items: center;
  background: #f0f1f0;
}
.panel h2 {
  display: flex;
  align-items: center;
  gap: 3px;
  white-space: nowrap;
}
.tools {
  display: flex;
  align-items: center;
  justify-content: center;
  gap: 2px;
  width: 100%;
  height: 30px;
}
.panel.green {
  background: #e2ebd5;
}
.green .tools {
  background: #eff2ec;
}
.w-select { width: 33px; }
.w-props { width: 31px; }
.w-clip { width: 32px; }
.w-geo { width: 58px; }
.w-modify { width: 94px; }
.w-view { width: 26px; }
.w-measure { width: 20px; }
.w-create { width: 33px; }
.w-mode { width: 26px; }
.w-shape { width: 116px; }
.panel button {
  display: flex;
  align-items: center;
  gap: 2px;
  white-space: nowrap;
}
.panel .on {
  background: #a9cdeb;
  outline: 1px solid #7fb2dc;
}
.panel .big {
  flex-direction: column;
  gap: 0;
  height: 28px;
  line-height: 6px;
}
.panel .big svg {
  width: 13px;
  height: 13px;
  margin-bottom: 2px;
}
.panel .big:disabled {
  color: #bbb;
}
.panel .big.last {
  padding-left: 2px;
  border-left: 1px solid #d5d8d2;
}
.w-select .big svg {
  width: 9px;
  margin-top: 1px;
}
.panel .lg {
  width: 13px;
  height: 13px;
}
.stack {
  flex-direction: column;
}
.rows {
  display: flex;
  flex-direction: column;
  align-self: flex-start;
  gap: 2px;
  padding-top: 3px;
}
.rows svg {
  width: 7px;
  height: 7px;
}
.rows.text button {
  width: 100%;
}
.w-geo .tools, .w-modify .tools {
  gap: 3px;
}
.w-geo .text .arrow {
  margin-left: auto;
}
.grid4 {
  display: grid;
  grid-template-columns: repeat(4, 13px);
  gap: 2px 3px;
}
.grid2 {
  display: grid;
  grid-template-columns: 13px 13px;
  gap: 2px;
}
.options {
  height: 10px;
  padding-left: 3px;
  line-height: 10px;
  background: #e2ebd5;
}

/* work area */
main {
  flex: 1;
  display: flex;
  gap: 3px;
  min-height: 0;
}
.caption {
  display: flex;
  align-items: center;
  justify-content: space-between;
  height: 9px;
  padding: 0 1px;
  white-space: nowrap;
  background: #f0f0f0;
}
.caption svg {
  width: 5px;
  height: 5px;
}
.properties {
  display: flex;
  flex-direction: column;
  width: 85px;
  background: #f0f0f0;
}
.type {
  display: flex;
  align-items: center;
  gap: 2px;
  height: 27px;
  padding: 0 1px 0 2px;
  border-top: 1px solid #ccc;
  white-space: nowrap;
}
.type .arrow {
  margin-left: auto;
}
.swatch {
  display: flex;
  flex-direction: column;
  width: 25px;
}
.swatch i {
  height: 8px;
  background: #fff;
  border: 1px solid #ddd;
}
.filter {
  display: flex;
  align-items: center;
  justify-content: space-between;
  height: 10px;
  margin-bottom: 1px;
}
select {
  appearance: none;
  padding: 0 2px;
  background: linear-gradient(#777, #777) right 2px center / 3px 1px no-repeat #fff;
}
.filter select {
  width: 49px;
  height: 9px;
  background-color: #e1e1e1;
  border: 1px solid #bbb;
}
.filter button {
  display: flex;
  align-items: center;
  gap: 1px;
  padding-right: 2px;
}
.sheet {
  flex: 1;
  background: #fff;
}
table {
  width: 100%;
  table-layout: fixed;
  border-collapse: collapse;
  border-right: 1px solid #ccc;
}
.name {
  width: 42px;
}
.bar {
  width: 5px;
}
tr {
  height: 7px;
}
th, td {
  padding: 0;
  line-height: 6px;
  font-weight: normal;
  text-align: left;
  white-space: nowrap;
  border-bottom: 1px solid #ddd;
}
th {
  padding-left: 2px;
}
td {
  border-left: 1px solid #ddd;
}
.head th, .head td {
  padding-left: 1px;
  font-weight: bold;
  background: #dcdcdc;
  border-left: 0;
}
.head svg {
  display: block;
  width: 4px;
  height: 4px;
}
.off {
  color: #999;
}
td.boxed {
  border: 1px solid #444;
  line-height: 5px;
}
td input {
  display: block;
  appearance: none;
  width: 5px;
  height: 5px;
  margin-left: 1px;
  border: 1px solid #666;
  background: #fff;
}
td input:disabled {
  border-color: #ddd;
}
td input:checked {
  background: linear-gradient(135deg, #fff 45%, #555 45%, #555 60%, #fff 60%);
}
.apply {
  display: flex;
  align-items: center;
  justify-content: space-between;
  height: 12px;
  padding: 0 1px;
}
.apply a {
  color: #1979ca;
  text-decoration: underline;
}
.apply button {
  width: 28px;
  height: 9px;
  background: #ccc;
  color: #999;
}

.workspace {
  flex: 1;
  display: flex;
  flex-direction: column;
  min-width: 0;
  background: #fff;
}
.viewtabs {
  display: flex;
  align-items: center;
  height: 10px;
  background: #c9c9c9;
}
.viewtabs a {
  display: flex;
  align-items: center;
  gap: 2px;
  width: 49px;
  height: 9px;
  padding-left: 1px;
}
.viewtabs svg {
  width: 7px;
  height: 7px;
}
.viewtabs .current {
  background: #fff;
  height: 10px;
}
.viewtabs .x {
  width: 5px;
  height: 5px;
  margin-left: auto;
  margin-right: 2px;
}
.viewtabs .arrow {
  margin-left: auto;
  margin-right: 3px;
}
.viewport {
  flex: 1;
  display: flex;
  min-height: 0;
}
.model {
  flex: 1;
  width: auto;
  height: 100%;
  min-width: 0;
}
.vscroll {
  display: flex;
  flex-direction: column;
  align-items: center;
  justify-content: space-between;
  width: 6px;
  padding: 2px 0;
  background: #f0f0f0;
}
.vscroll b {
  width: 5px;
  height: 6px;
  background: #c4c4c4;
}
.viewbar {
  display: flex;
  align-items: center;
  gap: 1px;
  height: 10px;
  padding-left: 8px;
}
.viewbar span {
  width: 20px;
}
.viewbar svg {
  width: 7px;
  height: 7px;
}
.viewbar .arrow.left {
  margin: 0 4px;
}
.hscroll {
  flex: 1;
  display: flex;
  align-items: center;
  justify-content: flex-end;
  height: 7px;
  padding-right: 7px;
  background: #f0f0f0;
}
.hscroll b {
  width: 6px;
  height: 6px;
  margin: auto;
  background: #c4c4c4;
}

.browser {
  display: flex;
  flex-direction: column;
  width: 81px;
  background: #fff;
  overflow: hidden;
}
.browser .caption {
  padding: 0;
}
.browser .caption svg {
  width: 4px;
}
.tree {
  flex: 1;
  list-style: none;
  white-space: nowrap;
}
.tree li {
  display: flex;
  align-items: center;
  gap: 1px;
  height: 7px;
  padding-left: 1px;
}
.tree svg {
  width: 7px;
  height: 7px;
}
.tree .pm {
  width: 5px;
  height: 5px;
}
.tree .sub {
  padding-left: 9px;
  gap: 4px;
}
.tree .sel {
  background: #dcdcdc;
}
.bscroll {
  display: flex;
  align-items: center;
  justify-content: space-between;
  height: 7px;
  padding: 0 2px;
  margin-bottom: 1px;
  background: #f0f0f0;
}
.bscroll b {
  width: 53px;
  height: 5px;
  margin-right: 16px;
  background: #c4c4c4;
}

/* status bar */
.status {
  display: flex;
  align-items: center;
  gap: 2px;
  height: 9px;
  background: #c9c9c9;
}
.status .msg {
  width: 349px;
}
.status select {
  width: 80px;
  height: 7px;
  color: #888;
  opacity: 1;
}
.status select:disabled {
  background-color: #f3f3f3;
}
.status .count {
  width: 8px;
}
.picks {
  display: flex;
  gap: 2px;
  margin-left: auto;
  padding-right: 22px;
}
.picks span {
  display: flex;
  padding-left: 3px;
}

/* taskbar */
.taskbar {
  display: flex;
  height: 16px;
  background: #0b3152;
  color: #fff;
}
.taskbar button {
  display: flex;
  align-items: center;
  justify-content: center;
  width: 19px;
}
.taskbar .app {
  width: 10px;
  height: 10px;
}
.find {
  display: flex;
  align-items: center;
  gap: 3px;
  width: 134px;
  padding-left: 4px;
  background: #f2f3f4;
  font-size: 6px;
}
.find input {
  flex: 1;
  color: #333;
}
input::placeholder {
  color: #555;
}
.taskbar .run {
  border-bottom: 1px solid #76b9ed;
}
.taskbar .front {
  background: #1b5486;
}
.front b {
  width: 10px;
  height: 10px;
  line-height: 10px;
  font-size: 8px;
  color: #1763a6;
  background: #e6eef6;
}
.tray {
  display: flex;
  align-items: center;
  gap: 2px;
  margin-left: auto;
  padding-right: 7px;
}
.tray time {
  margin-right: 3px;
  text-align: center;
}
```
